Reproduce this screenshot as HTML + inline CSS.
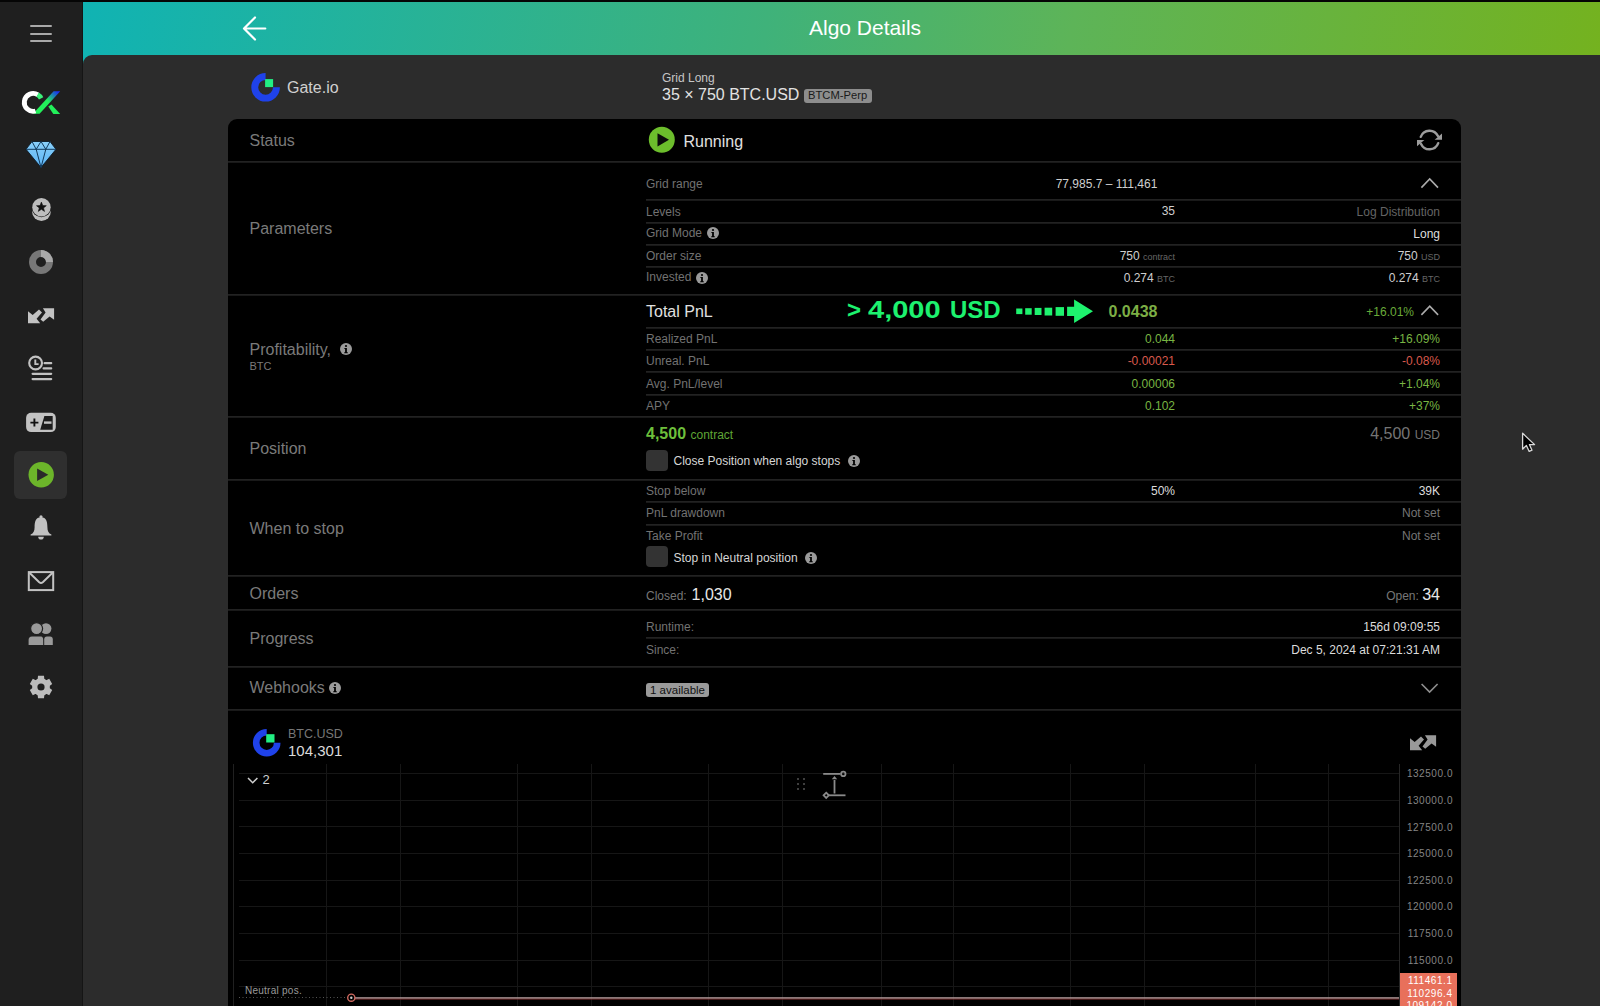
<!DOCTYPE html>
<html><head><meta charset="utf-8"><title>Algo Details</title>
<style>
html,body{margin:0;padding:0;width:1600px;height:1006px;overflow:hidden;background:#2c2c2c;}
body{position:relative;font-family:"Liberation Sans", sans-serif;}
.t{position:absolute;white-space:nowrap;}
.r{position:absolute;}
svg.r{overflow:visible;}
</style></head><body>
<div class="r" style="left:0.00px;top:0.00px;width:1600.00px;height:1006.00px;background:#2c2c2c;"></div>
<div class="r" style="left:0.00px;top:0.00px;width:83.00px;height:1006.00px;background:#1f1f1f;"></div>
<div class="r" style="left:82.00px;top:0.00px;width:1.00px;height:1006.00px;background:#151515;"></div>
<div class="r" style="left:83.00px;top:2.00px;width:1517.00px;height:64.00px;background:linear-gradient(100deg,#10b3b3 0%,#3fb27a 45%,#5db458 65%,#74b21f 100%);"></div>
<div class="r" style="left:0.00px;top:0.00px;width:1600.00px;height:2.00px;background:#050505;"></div>
<div class="r" style="left:83.00px;top:55.00px;width:1517.00px;height:951.00px;background:#2c2c2c;border-top-left-radius:9px;"></div>
<svg class="r" style="left:236px;top:10px" width="36" height="36" viewBox="236 10 36 36"><path d="M265.3 28.5H244.2M255 17.5L244 28.5L255 39.5" fill="none" stroke="#fff" stroke-width="2.2" stroke-linecap="round" stroke-linejoin="round"/></svg>
<div class="t" style="left:809.00px;top:17.00px;font-size:21px;line-height:21px;color:#ffffff;">Algo Details</div>
<svg class="r" style="left:0;top:0" width="1600" height="1006"><path d="M265.60 76.45 A10.85 10.85 0 1 0 276.45 87.30" fill="none" stroke="#1f42ea" stroke-width="6.90"/><rect x="265.10" y="79.10" width="8.0" height="8.0" fill="#22ef84"/></svg>
<div class="t" style="left:287.00px;top:80.00px;font-size:16px;line-height:16px;color:#d0d0d0;">Gate.io</div>
<div class="t" style="left:662.00px;top:72.00px;font-size:12px;line-height:12px;color:#c6c6c6;">Grid Long</div>
<div class="t" style="left:662.00px;top:87.00px;font-size:16px;line-height:16px;color:#e2e2e2;">35 × 750 BTC.USD</div>
<div class="r" style="left:804.00px;top:88.70px;width:67.50px;height:14.80px;background:#8d8d8d;border-radius:3px;"></div>
<div class="t" style="left:337.60px;width:1000px;text-align:center;top:90.00px;font-size:11.2px;line-height:11.2px;color:#1a1a1a;">BTCM-Perp</div>
<div class="r" style="left:228.00px;top:119.00px;width:1233.00px;height:887.00px;background:#000;border-radius:9px 9px 0 0;"></div>
<div class="r" style="left:228.00px;top:161.00px;width:1233.00px;height:1.00px;background:#222222;"></div>
<div class="r" style="left:228.00px;top:162.00px;width:1233.00px;height:1.00px;background:#191919;"></div>
<div class="r" style="left:228.00px;top:294.00px;width:1233.00px;height:1.00px;background:#222222;"></div>
<div class="r" style="left:228.00px;top:295.00px;width:1233.00px;height:1.00px;background:#191919;"></div>
<div class="r" style="left:228.00px;top:416.00px;width:1233.00px;height:1.00px;background:#222222;"></div>
<div class="r" style="left:228.00px;top:417.00px;width:1233.00px;height:1.00px;background:#191919;"></div>
<div class="r" style="left:228.00px;top:479.00px;width:1233.00px;height:1.00px;background:#222222;"></div>
<div class="r" style="left:228.00px;top:480.00px;width:1233.00px;height:1.00px;background:#191919;"></div>
<div class="r" style="left:228.00px;top:575.00px;width:1233.00px;height:1.00px;background:#222222;"></div>
<div class="r" style="left:228.00px;top:576.00px;width:1233.00px;height:1.00px;background:#191919;"></div>
<div class="r" style="left:228.00px;top:609.00px;width:1233.00px;height:1.00px;background:#222222;"></div>
<div class="r" style="left:228.00px;top:610.00px;width:1233.00px;height:1.00px;background:#191919;"></div>
<div class="r" style="left:228.00px;top:666.00px;width:1233.00px;height:1.00px;background:#222222;"></div>
<div class="r" style="left:228.00px;top:667.00px;width:1233.00px;height:1.00px;background:#191919;"></div>
<div class="r" style="left:228.00px;top:709.00px;width:1233.00px;height:1.00px;background:#222222;"></div>
<div class="r" style="left:228.00px;top:710.00px;width:1233.00px;height:1.00px;background:#191919;"></div>
<div class="r" style="left:646.00px;top:199.00px;width:815.00px;height:1.00px;background:#222222;"></div>
<div class="r" style="left:646.00px;top:200.00px;width:815.00px;height:1.00px;background:#191919;"></div>
<div class="r" style="left:646.00px;top:222.00px;width:815.00px;height:1.00px;background:#222222;"></div>
<div class="r" style="left:646.00px;top:223.00px;width:815.00px;height:1.00px;background:#191919;"></div>
<div class="r" style="left:646.00px;top:244.00px;width:815.00px;height:1.00px;background:#222222;"></div>
<div class="r" style="left:646.00px;top:245.00px;width:815.00px;height:1.00px;background:#191919;"></div>
<div class="r" style="left:646.00px;top:266.00px;width:815.00px;height:1.00px;background:#222222;"></div>
<div class="r" style="left:646.00px;top:267.00px;width:815.00px;height:1.00px;background:#191919;"></div>
<div class="r" style="left:646.00px;top:327.00px;width:815.00px;height:1.00px;background:#222222;"></div>
<div class="r" style="left:646.00px;top:328.00px;width:815.00px;height:1.00px;background:#191919;"></div>
<div class="r" style="left:646.00px;top:349.00px;width:815.00px;height:1.00px;background:#222222;"></div>
<div class="r" style="left:646.00px;top:350.00px;width:815.00px;height:1.00px;background:#191919;"></div>
<div class="r" style="left:646.00px;top:371.00px;width:815.00px;height:1.00px;background:#222222;"></div>
<div class="r" style="left:646.00px;top:372.00px;width:815.00px;height:1.00px;background:#191919;"></div>
<div class="r" style="left:646.00px;top:394.00px;width:815.00px;height:1.00px;background:#222222;"></div>
<div class="r" style="left:646.00px;top:395.00px;width:815.00px;height:1.00px;background:#191919;"></div>
<div class="r" style="left:646.00px;top:501.00px;width:815.00px;height:1.00px;background:#222222;"></div>
<div class="r" style="left:646.00px;top:502.00px;width:815.00px;height:1.00px;background:#191919;"></div>
<div class="r" style="left:646.00px;top:524.00px;width:815.00px;height:1.00px;background:#222222;"></div>
<div class="r" style="left:646.00px;top:525.00px;width:815.00px;height:1.00px;background:#191919;"></div>
<div class="r" style="left:646.00px;top:637.00px;width:815.00px;height:1.00px;background:#222222;"></div>
<div class="r" style="left:646.00px;top:638.00px;width:815.00px;height:1.00px;background:#191919;"></div>
<div class="t" style="left:249.50px;top:133.00px;font-size:16px;line-height:16px;color:#7a7a7a;">Status</div>
<div class="t" style="left:249.50px;top:221.00px;font-size:16px;line-height:16px;color:#7a7a7a;">Parameters</div>
<div class="t" style="left:249.50px;top:342.00px;font-size:16px;line-height:16px;color:#7a7a7a;">Profitability,</div>
<div class="t" style="left:249.50px;top:361.00px;font-size:11px;line-height:11px;color:#7a7a7a;">BTC</div>
<div class="t" style="left:249.50px;top:441.00px;font-size:16px;line-height:16px;color:#7a7a7a;">Position</div>
<div class="t" style="left:249.50px;top:521.00px;font-size:16px;line-height:16px;color:#7a7a7a;">When to stop</div>
<div class="t" style="left:249.50px;top:586.00px;font-size:16px;line-height:16px;color:#7a7a7a;">Orders</div>
<div class="t" style="left:249.50px;top:631.00px;font-size:16px;line-height:16px;color:#7a7a7a;">Progress</div>
<div class="t" style="left:249.50px;top:680.00px;font-size:16px;line-height:16px;color:#7a7a7a;">Webhooks</div>
<svg class="r" style="left:340.00px;top:342.60px" width="12" height="12" viewBox="-6 -6 12 12"><circle r="6" fill="#9a9a9a"/><circle cx="0" cy="-3" r="1.1" fill="#000"/><path d="M-1.6 -1H0.9V3.2H1.8V4.2H-1.8V3.2H-0.9V0H-1.6Z" fill="#000"/></svg>
<svg class="r" style="left:329.20px;top:682.30px" width="12" height="12" viewBox="-6 -6 12 12"><circle r="6" fill="#9a9a9a"/><circle cx="0" cy="-3" r="1.1" fill="#000"/><path d="M-1.6 -1H0.9V3.2H1.8V4.2H-1.8V3.2H-0.9V0H-1.6Z" fill="#000"/></svg>
<svg class="r" style="left:648px;top:126px" width="28" height="28" viewBox="0 0 28 28"><circle cx="13.8" cy="13.8" r="13" fill="#6cbd2c"/><path d="M9.5 7.2L21 13.8L9.5 20.4Z" fill="#0b0b0b"/></svg>
<div class="t" style="left:683.50px;top:134.00px;font-size:16px;line-height:16px;color:#e0e0e0;">Running</div>
<svg class="r" style="left:0;top:0" width="1600" height="1006"><g fill="none" stroke="#9c9c9c" stroke-width="2.4" stroke-linecap="round"><path d="M1420.76 136.82A9.3 9.3 0 0 1 1437.93 136.07"/><path d="M1438.24 143.18A9.3 9.3 0 0 1 1421.07 143.93"/></g><g fill="#9c9c9c"><path d="M1434.6 139.8H1442V133.4Z"/><path d="M1424.4 139.9H1417V146.3Z"/></g></svg>
<div class="t" style="left:646.00px;top:178.00px;font-size:12px;line-height:12px;color:#727272;">Grid range</div>
<div class="t" style="left:606.50px;width:1000px;text-align:center;top:178.00px;font-size:12px;line-height:12px;color:#cfcfcf;">77,985.7 – 111,461</div>
<svg class="r" style="left:0;top:0" width="1600" height="1006"><path d="M1421.4 187.6L1429.7 179L1438 187.6" fill="none" stroke="#ababab" stroke-width="1.6"/></svg>
<div class="t" style="left:646.00px;top:206.00px;font-size:12px;line-height:12px;color:#727272;">Levels</div>
<div class="t" style="right:425.00px;top:205.00px;font-size:12px;line-height:12px;color:#cfcfcf;">35</div>
<div class="t" style="right:160.00px;top:206.00px;font-size:12px;line-height:12px;color:#646464;">Log Distribution</div>
<div class="t" style="left:646.00px;top:227.00px;font-size:12px;line-height:12px;color:#727272;">Grid Mode</div>
<svg class="r" style="left:706.80px;top:227.20px" width="12" height="12" viewBox="-6 -6 12 12"><circle r="6" fill="#9a9a9a"/><circle cx="0" cy="-3" r="1.1" fill="#000"/><path d="M-1.6 -1H0.9V3.2H1.8V4.2H-1.8V3.2H-0.9V0H-1.6Z" fill="#000"/></svg>
<div class="t" style="right:160.00px;top:228.00px;font-size:12px;line-height:12px;color:#dedede;">Long</div>
<div class="t" style="left:646.00px;top:250.00px;font-size:12px;line-height:12px;color:#727272;">Order size</div>
<div class="t" style="right:425.00px;top:250.00px;font-size:12px;line-height:12px;color:#cfcfcf;">750 <span style="font-size:9px;color:#666">contract</span></div>
<div class="t" style="right:160.00px;top:250.00px;font-size:12px;line-height:12px;color:#cfcfcf;">750 <span style="font-size:9px;color:#666">USD</span></div>
<div class="t" style="left:646.00px;top:271.00px;font-size:12px;line-height:12px;color:#727272;">Invested</div>
<svg class="r" style="left:696.00px;top:272.00px" width="12" height="12" viewBox="-6 -6 12 12"><circle r="6" fill="#9a9a9a"/><circle cx="0" cy="-3" r="1.1" fill="#000"/><path d="M-1.6 -1H0.9V3.2H1.8V4.2H-1.8V3.2H-0.9V0H-1.6Z" fill="#000"/></svg>
<div class="t" style="right:425.00px;top:272.00px;font-size:12px;line-height:12px;color:#cfcfcf;">0.274 <span style="font-size:9px;color:#666">BTC</span></div>
<div class="t" style="right:160.00px;top:272.00px;font-size:12px;line-height:12px;color:#cfcfcf;">0.274 <span style="font-size:9px;color:#666">BTC</span></div>
<div class="t" style="left:646.00px;top:304.00px;font-size:16px;line-height:16px;color:#e0e0e0;">Total PnL</div>
<div class="t" style="left:847.00px;top:298.00px;font-size:24px;line-height:24px;color:#1df26f;font-weight:700;">&gt;</div>
<div class="t" style="left:868.20px;top:298.00px;font-size:24px;line-height:24px;color:#1df26f;font-weight:700;transform:scaleX(1.21);transform-origin:0 0;">4,000</div>
<div class="t" style="left:950.00px;top:298.00px;font-size:24px;line-height:24px;color:#1df26f;font-weight:700;">USD</div>
<svg class="r" style="left:0;top:0" width="1600" height="1006"><g fill="#1ef26e"><rect x="1016.2" y="308.5" width="6.2" height="5.6"/><rect x="1025.2" y="308.2" width="6.5" height="6.5"/><rect x="1034.7" y="307.9" width="6.8" height="7.1"/><rect x="1044.6" y="307.7" width="7.6" height="7.8"/><rect x="1055.6" y="307.1" width="8.4" height="8.7"/><path d="M1067.1 306.8H1074.1V299.5L1093 311.3L1074.1 323.1V316.1H1067.1Z"/></g></svg>
<div class="t" style="left:1108.50px;top:304.00px;font-size:16px;line-height:16px;color:#7cae45;"><b>0.0438</b></div>
<div class="t" style="right:186.00px;top:306.00px;font-size:12px;line-height:12px;color:#6aab3a;">+16.01%</div>
<svg class="r" style="left:0;top:0" width="1600" height="1006"><path d="M1421.4 314.9L1429.75 306.2L1438.1 314.9" fill="none" stroke="#ababab" stroke-width="1.6"/></svg>
<div class="t" style="left:646.00px;top:333.00px;font-size:12px;line-height:12px;color:#727272;">Realized PnL</div>
<div class="t" style="right:425.00px;top:333.00px;font-size:12px;line-height:12px;color:#78b543;">0.044</div>
<div class="t" style="right:160.00px;top:333.00px;font-size:12px;line-height:12px;color:#78b543;">+16.09%</div>
<div class="t" style="left:646.00px;top:355.00px;font-size:12px;line-height:12px;color:#727272;">Unreal. PnL</div>
<div class="t" style="right:425.00px;top:355.00px;font-size:12px;line-height:12px;color:#d9594c;">-0.00021</div>
<div class="t" style="right:160.00px;top:355.00px;font-size:12px;line-height:12px;color:#d9594c;">-0.08%</div>
<div class="t" style="left:646.00px;top:378.00px;font-size:12px;line-height:12px;color:#727272;">Avg. PnL/level</div>
<div class="t" style="right:425.00px;top:378.00px;font-size:12px;line-height:12px;color:#78b543;">0.00006</div>
<div class="t" style="right:160.00px;top:378.00px;font-size:12px;line-height:12px;color:#78b543;">+1.04%</div>
<div class="t" style="left:646.00px;top:400.00px;font-size:12px;line-height:12px;color:#727272;">APY</div>
<div class="t" style="right:425.00px;top:400.00px;font-size:12px;line-height:12px;color:#78b543;">0.102</div>
<div class="t" style="right:160.00px;top:400.00px;font-size:12px;line-height:12px;color:#78b543;">+37%</div>
<div class="t" style="left:646.00px;top:426.00px;font-size:16px;line-height:16px;color:#6dbf3b;"><b>4,500</b> <span style="font-size:12px;color:#5fa636">contract</span></div>
<div class="t" style="right:160.00px;top:426.00px;font-size:16px;line-height:16px;color:#757575;">4,500 <span style="font-size:12px">USD</span></div>
<div class="r" style="left:646.00px;top:449.50px;width:22.00px;height:21.50px;background:#333333;border-radius:4px;"></div>
<div class="t" style="left:673.50px;top:455.00px;font-size:12px;line-height:12px;color:#d6d6d6;">Close Position when algo stops</div>
<svg class="r" style="left:847.50px;top:455.00px" width="12" height="12" viewBox="-6 -6 12 12"><circle r="6" fill="#9a9a9a"/><circle cx="0" cy="-3" r="1.1" fill="#000"/><path d="M-1.6 -1H0.9V3.2H1.8V4.2H-1.8V3.2H-0.9V0H-1.6Z" fill="#000"/></svg>
<div class="t" style="left:646.00px;top:485.00px;font-size:12px;line-height:12px;color:#727272;">Stop below</div>
<div class="t" style="right:425.00px;top:485.00px;font-size:12px;line-height:12px;color:#dcdcdc;">50%</div>
<div class="t" style="right:160.00px;top:485.00px;font-size:12px;line-height:12px;color:#dcdcdc;">39K</div>
<div class="t" style="left:646.00px;top:507.00px;font-size:12px;line-height:12px;color:#727272;">PnL drawdown</div>
<div class="t" style="right:160.00px;top:507.00px;font-size:12px;line-height:12px;color:#757575;">Not set</div>
<div class="t" style="left:646.00px;top:530.00px;font-size:12px;line-height:12px;color:#727272;">Take Profit</div>
<div class="t" style="right:160.00px;top:530.00px;font-size:12px;line-height:12px;color:#757575;">Not set</div>
<div class="r" style="left:646.00px;top:546.30px;width:22.00px;height:20.70px;background:#333333;border-radius:4px;"></div>
<div class="t" style="left:673.50px;top:552.00px;font-size:12px;line-height:12px;color:#d6d6d6;">Stop in Neutral position</div>
<svg class="r" style="left:805.00px;top:552.00px" width="12" height="12" viewBox="-6 -6 12 12"><circle r="6" fill="#9a9a9a"/><circle cx="0" cy="-3" r="1.1" fill="#000"/><path d="M-1.6 -1H0.9V3.2H1.8V4.2H-1.8V3.2H-0.9V0H-1.6Z" fill="#000"/></svg>
<div class="t" style="left:646.00px;top:589.00px;font-size:12px;line-height:12px;color:#777777;">Closed: <span style="font-size:16px;color:#e8e8e8;margin-left:1.5px">1,030</span></div>
<div class="t" style="right:160.00px;top:589.00px;font-size:12px;line-height:12px;color:#777777;">Open: <span style="font-size:16px;color:#e8e8e8">34</span></div>
<div class="t" style="left:646.00px;top:621.00px;font-size:12px;line-height:12px;color:#727272;">Runtime:</div>
<div class="t" style="right:160.00px;top:621.00px;font-size:12px;line-height:12px;color:#dcdcdc;">156d 09:09:55</div>
<div class="t" style="left:646.00px;top:644.00px;font-size:12px;line-height:12px;color:#727272;">Since:</div>
<div class="t" style="right:160.00px;top:644.00px;font-size:12px;line-height:12px;color:#dcdcdc;">Dec 5, 2024 at 07:21:31 AM</div>
<div class="r" style="left:646.00px;top:682.60px;width:63.00px;height:14.80px;background:#9a9a9a;border-radius:3px;"></div>
<div class="t" style="left:177.50px;width:1000px;text-align:center;top:685.00px;font-size:11.5px;line-height:11.5px;color:#111;">1 available</div>
<svg class="r" style="left:0;top:0" width="1600" height="1006"><path d="M1421.6 684L1429.6 692L1437.6 684" fill="none" stroke="#8e8e8e" stroke-width="1.6"/></svg>
<svg class="r" style="left:0;top:0" width="1600" height="1006"><path d="M266.70 732.20 A10.50 10.50 0 1 0 277.20 742.70" fill="none" stroke="#1f42ea" stroke-width="6.60"/><rect x="266.20" y="734.20" width="8.3" height="8.3" fill="#22ef84"/></svg>
<div class="t" style="left:288.00px;top:728.00px;font-size:12.5px;line-height:12.5px;color:#777777;">BTC.USD</div>
<div class="t" style="left:288.00px;top:743.00px;font-size:15px;line-height:15px;color:#dadada;">104,301</div>
<div class="r" style="left:233.00px;top:764.00px;width:1.00px;height:242.00px;background:#202020;"></div>
<div class="r" style="left:1399.00px;top:764.00px;width:1.00px;height:242.00px;background:#262626;"></div>
<div class="r" style="left:239.00px;top:773.00px;width:1160.00px;height:1.00px;background:#161616;"></div>
<div class="r" style="left:239.00px;top:799.66px;width:1160.00px;height:1.00px;background:#161616;"></div>
<div class="r" style="left:239.00px;top:826.32px;width:1160.00px;height:1.00px;background:#161616;"></div>
<div class="r" style="left:239.00px;top:852.98px;width:1160.00px;height:1.00px;background:#161616;"></div>
<div class="r" style="left:239.00px;top:879.64px;width:1160.00px;height:1.00px;background:#161616;"></div>
<div class="r" style="left:239.00px;top:906.30px;width:1160.00px;height:1.00px;background:#161616;"></div>
<div class="r" style="left:239.00px;top:932.96px;width:1160.00px;height:1.00px;background:#161616;"></div>
<div class="r" style="left:239.00px;top:959.62px;width:1160.00px;height:1.00px;background:#161616;"></div>
<div class="r" style="left:239.00px;top:986.28px;width:1160.00px;height:1.00px;background:#161616;"></div>
<div class="r" style="left:326.00px;top:764.00px;width:1.00px;height:242.00px;background:#161616;"></div>
<div class="r" style="left:400.30px;top:764.00px;width:1.00px;height:242.00px;background:#161616;"></div>
<div class="r" style="left:516.50px;top:764.00px;width:1.00px;height:242.00px;background:#161616;"></div>
<div class="r" style="left:590.50px;top:764.00px;width:1.00px;height:242.00px;background:#161616;"></div>
<div class="r" style="left:707.50px;top:764.00px;width:1.00px;height:242.00px;background:#161616;"></div>
<div class="r" style="left:781.50px;top:764.00px;width:1.00px;height:242.00px;background:#161616;"></div>
<div class="r" style="left:880.50px;top:764.00px;width:1.00px;height:242.00px;background:#161616;"></div>
<div class="r" style="left:953.00px;top:764.00px;width:1.00px;height:242.00px;background:#161616;"></div>
<div class="r" style="left:1070.30px;top:764.00px;width:1.00px;height:242.00px;background:#161616;"></div>
<div class="r" style="left:1143.50px;top:764.00px;width:1.00px;height:242.00px;background:#161616;"></div>
<div class="r" style="left:1255.00px;top:764.00px;width:1.00px;height:242.00px;background:#161616;"></div>
<div class="r" style="left:1328.30px;top:764.00px;width:1.00px;height:242.00px;background:#161616;"></div>
<div class="t" style="right:147.00px;top:769.00px;font-size:10px;line-height:10px;color:#858585;letter-spacing:0.55px;">132500.0</div>
<div class="t" style="right:147.00px;top:796.00px;font-size:10px;line-height:10px;color:#858585;letter-spacing:0.55px;">130000.0</div>
<div class="t" style="right:147.00px;top:823.00px;font-size:10px;line-height:10px;color:#858585;letter-spacing:0.55px;">127500.0</div>
<div class="t" style="right:147.00px;top:849.00px;font-size:10px;line-height:10px;color:#858585;letter-spacing:0.55px;">125000.0</div>
<div class="t" style="right:147.00px;top:876.00px;font-size:10px;line-height:10px;color:#858585;letter-spacing:0.55px;">122500.0</div>
<div class="t" style="right:147.00px;top:902.00px;font-size:10px;line-height:10px;color:#858585;letter-spacing:0.55px;">120000.0</div>
<div class="t" style="right:147.00px;top:929.00px;font-size:10px;line-height:10px;color:#858585;letter-spacing:0.55px;">117500.0</div>
<div class="t" style="right:147.00px;top:956.00px;font-size:10px;line-height:10px;color:#858585;letter-spacing:0.55px;">115000.0</div>
<div class="r" style="left:1400.00px;top:972.70px;width:57.00px;height:33.30px;background:#e8705b;"></div>
<div class="t" style="right:147.50px;top:976.00px;font-size:10px;line-height:10px;color:#fff;letter-spacing:0.55px;">111461.1</div>
<div class="t" style="right:147.50px;top:989.00px;font-size:10px;line-height:10px;color:#fff;letter-spacing:0.55px;">110296.4</div>
<div class="t" style="right:147.50px;top:1001.00px;font-size:10px;line-height:10px;color:#fff;letter-spacing:0.55px;">109142.0</div>
<svg class="r" style="left:0;top:0" width="1600" height="1006"><path d="M248 778L252.7 782.8L257.4 778" fill="none" stroke="#cfcfcf" stroke-width="1.5"/></svg>
<div class="t" style="left:262.50px;top:773.00px;font-size:13px;line-height:13px;color:#d0d0d0;">2</div>
<div class="r" style="left:797.20px;top:777.90px;width:2.00px;height:2.00px;background:#3e3e3e;"></div>
<div class="r" style="left:797.20px;top:783.20px;width:2.00px;height:2.00px;background:#3e3e3e;"></div>
<div class="r" style="left:797.20px;top:788.40px;width:2.00px;height:2.00px;background:#3e3e3e;"></div>
<div class="r" style="left:803.30px;top:777.90px;width:2.00px;height:2.00px;background:#3e3e3e;"></div>
<div class="r" style="left:803.30px;top:783.20px;width:2.00px;height:2.00px;background:#3e3e3e;"></div>
<div class="r" style="left:803.30px;top:788.40px;width:2.00px;height:2.00px;background:#3e3e3e;"></div>
<svg class="r" style="left:0;top:0" width="1600" height="1006"><g stroke="#8a8a8a" stroke-width="1.8" fill="none"><path d="M823.2 773.9H840.5"/><circle cx="843.3" cy="773.9" r="2.2"/><path d="M834.5 793.5V780"/><path d="M828.6 795.3H845.5"/><path d="M826.2 792.7L828.8 795.3L826.2 797.9L823.6 795.3Z"/></g><path d="M831.8 779.2L834.5 776L837.2 779.2Z" fill="#8a8a8a"/></svg>
<svg class="r" style="left:1410px;top:734.7px" width="26.00" height="16.00" viewBox="0 0 26 16"><g fill="#999999"><path d="M0 15.3V3.3L4.7 7.1L11 1.4L14 4.5L8.6 10.8L12.2 15.3Z"/><path d="M26.1 0.2H14.9L17.6 4.5L12.5 11.4L15.2 13.8L21.6 8.6L26.1 11.7Z"/></g></svg>
<div class="t" style="left:245.00px;top:986.00px;font-size:10px;line-height:10px;color:#9a9a9a;letter-spacing:0.25px;">Neutral pos.</div>
<svg class="r" style="left:0;top:0" width="1600" height="1006"><path d="M239 997.5H347" stroke="#555" stroke-width="1" stroke-dasharray="1 2.5"/><path d="M355 998H1399" stroke="#b9a0a0" stroke-width="1.6"/><path d="M355 999.2H1399" stroke="#7a2a2a" stroke-width="0.8"/><circle cx="351.3" cy="997.7" r="3.6" fill="none" stroke="#d06a60" stroke-width="1.4"/><circle cx="351.3" cy="997.7" r="1.2" fill="#ccc"/></svg>
<div class="r" style="left:30.30px;top:24.80px;width:21.40px;height:2.20px;background:#a9a9a9;border-radius:1px;"></div>
<div class="r" style="left:30.30px;top:32.50px;width:21.40px;height:2.20px;background:#a9a9a9;border-radius:1px;"></div>
<div class="r" style="left:30.30px;top:40.20px;width:21.40px;height:2.20px;background:#a9a9a9;border-radius:1px;"></div>
<svg class="r" style="left:0;top:80px" width="83" height="45" viewBox="0 80 83 45"><defs><linearGradient id="lg1" gradientUnits="userSpaceOnUse" x1="36" y1="113" x2="58" y2="92"><stop offset="0" stop-color="#22f05a"/><stop offset="0.55" stop-color="#22f05a"/><stop offset="1" stop-color="#1830f5"/></linearGradient></defs><path d="M33 113.7H39.6L60.2 91.3H53.6Z" fill="url(#lg1)"/><path d="M35.50 111.00A8.9 8.9 0 1 1 37.92 94.85" fill="none" stroke="#fff" stroke-width="4.85"/><path d="M37.65 94.69A8.9 8.9 0 0 1 41.13 98.36" fill="none" stroke="#3cf07a" stroke-width="4.85"/><path d="M48.3 106.6L51.4 104.4L60.2 114.1H53.3Z" fill="#22f05a"/></svg>
<svg class="r" style="left:25px;top:141px" width="32" height="27" viewBox="0 0 32 27"><defs><linearGradient id="dg" x1="0" y1="0" x2="0" y2="1"><stop offset="0" stop-color="#8ad0fa"/><stop offset="1" stop-color="#5ab4f6"/></linearGradient></defs><path d="M7 0.5H25L31 8.3L16 26.5L1 8.3Z" fill="url(#dg)" stroke="#0c1a26" stroke-width="0.9" stroke-linejoin="round"/><path d="M1 8.3H31M7 0.5L11.2 8.3L16 26.5L20.8 8.3L25 0.5M11.2 8.3L16 0.5L20.8 8.3" fill="none" stroke="#123a5c" stroke-width="1"/></svg>
<svg class="r" style="left:26px;top:192px" width="32" height="34" viewBox="26 192 32 34"><ellipse cx="41.45" cy="211.8" rx="9.35" ry="9.2" fill="#bdbdbd"/><circle cx="41.45" cy="207.2" r="10" fill="#1f1f1f"/><circle cx="41.45" cy="207.2" r="9.2" fill="#bdbdbd"/><path d="M41.4 202.1L42.75 205.6L46.3 205.7L43.5 207.9L44.5 211.4L41.4 209.3L38.3 211.4L39.3 207.9L36.5 205.7L40.05 205.6Z" fill="#111" stroke="#111" stroke-width="0.6" stroke-linejoin="round"/></svg>
<svg class="r" style="left:29px;top:250px" width="24" height="24" viewBox="0 0 24 24"><circle cx="12" cy="12" r="8.5" fill="none" stroke="#777" stroke-width="7"/><path d="M12 3.5A8.5 8.5 0 0 1 20.5 12" fill="none" stroke="#a9a9a9" stroke-width="7"/></svg>
<svg class="r" style="left:27.7px;top:307.7px" width="26.00" height="16.00" viewBox="0 0 26 16"><g fill="#c2c2c2"><path d="M0 15.3V3.3L4.7 7.1L11 1.4L14 4.5L8.6 10.8L12.2 15.3Z"/><path d="M26.1 0.2H14.9L17.6 4.5L12.5 11.4L15.2 13.8L21.6 8.6L26.1 11.7Z"/></g></svg>
<svg class="r" style="left:26px;top:353px" width="28" height="30" viewBox="0 0 28 30"><circle cx="9.6" cy="10" r="6.4" fill="none" stroke="#c2c2c2" stroke-width="2.1"/><path d="M9.3 6.4V11.1H12.6" fill="none" stroke="#c2c2c2" stroke-width="1.9"/><path d="M18.6 10.2H25.2M17.6 15.4H25.2M6.6 20.8H25.2M6.6 26.1H25.2" stroke="#c2c2c2" stroke-width="2.2" stroke-linecap="round"/></svg>
<svg class="r" style="left:25px;top:412px" width="32" height="21" viewBox="0 0 32 21"><rect x="1.1" y="0.8" width="29.7" height="19.3" rx="5" fill="#c2c2c2"/><path d="M19.4 4.1H27.7V17.7H15.2Z" fill="#1c1c1c"/><path d="M5.4 10.6H13.4M9.4 6.6V14.6" stroke="#111" stroke-width="1.9"/><path d="M19 10.6H26.5" stroke="#c2c2c2" stroke-width="2.4"/></svg>
<div class="r" style="left:14.40px;top:451.00px;width:53.00px;height:47.60px;background:#2f2f2f;border-radius:6px;"></div>
<svg class="r" style="left:28px;top:462px" width="27" height="27" viewBox="0 0 27 27"><circle cx="13.2" cy="12.7" r="12.7" fill="#6cb52a"/><path d="M9.1 6.5L20.3 12.7L9.1 19Z" fill="#2a2a2a"/></svg>
<svg class="r" style="left:29px;top:514px" width="24" height="27" viewBox="0 0 24 27"><circle cx="12" cy="2.8" r="1.6" fill="#c2c2c2"/><path d="M12 3.2C6.5 3.2 5.6 8 5.6 13.2C5.6 17 4.5 19.2 1.6 20.6V21.6H22.4V20.6C19.5 19.2 18.4 17 18.4 13.2C18.4 8 17.5 3.2 12 3.2Z" fill="#c2c2c2"/><path d="M9.2 22.8A2.8 2.8 0 0 0 14.8 22.8Z" fill="#c2c2c2"/></svg>
<svg class="r" style="left:26px;top:569px" width="30" height="24" viewBox="0 0 30 24"><rect x="2.8" y="3.1" width="24.4" height="18" fill="none" stroke="#c2c2c2" stroke-width="2"/><path d="M3.2 3.5L13.2 13.3Q15 14.6 16.8 13.3L26.8 3.5" fill="none" stroke="#c2c2c2" stroke-width="2"/></svg>
<svg class="r" style="left:28px;top:621px" width="26" height="26" viewBox="0 0 26 26"><circle cx="18" cy="7.6" r="5.4" fill="#9a9a9a"/><path d="M16.2 24V18.5Q16.2 15.6 19 15.6H22Q24.8 15.6 24.8 18.5V24Z" fill="#9a9a9a"/><circle cx="8.6" cy="7.6" r="6" fill="#9a9a9a" stroke="#1f1f1f" stroke-width="1.2"/><path d="M0.6 24V19Q0.6 15.5 4 15.5H13Q15.2 15.5 15.2 19V24Z" fill="#9a9a9a"/></svg>
<svg class="r" style="left:29px;top:675px" width="24" height="24" viewBox="0 0 24 24"><path d="M8.65 4.08 L9.02 0.79 L14.98 0.79 L15.35 4.08 L17.19 5.14 L20.22 3.81 L23.20 8.98 L20.53 10.94 L20.53 13.06 L23.20 15.02 L20.22 20.19 L17.19 18.86 L15.35 19.92 L14.98 23.21 L9.02 23.21 L8.65 19.92 L6.81 18.86 L3.78 20.19 L0.80 15.02 L3.47 13.06 L3.47 10.94 L0.80 8.98 L3.78 3.81 L6.81 5.14Z" fill="#bcbcbc"/><circle cx="12" cy="12" r="8.7" fill="#bcbcbc"/><circle cx="12" cy="12" r="3.6" fill="#1f1f1f"/></svg>
<svg class="r" style="left:1518px;top:429px" width="22" height="26" viewBox="0 0 22 26"><path d="M4.6 4.2V20.2L8.4 16.4L11.2 22.4L14 21.2L11.4 15.6H16.6Z" fill="#000" stroke="#d8d8d8" stroke-width="1.3" stroke-linejoin="round"/></svg>
</body></html>
